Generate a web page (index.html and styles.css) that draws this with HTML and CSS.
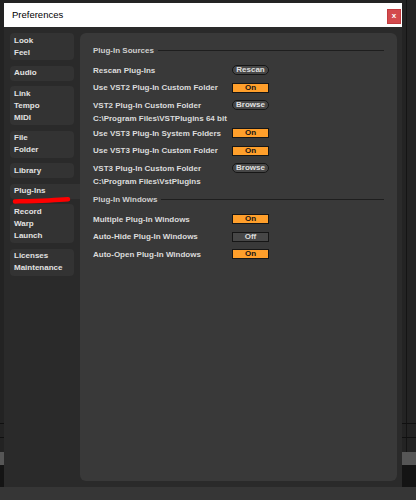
FILE: index.html
```html
<!DOCTYPE html>
<html>
<head>
    <title>Preferences</title>
    <link rel="stylesheet" href="styles.css">
</head>
<body>
    <div class="window">
        <div class="titlebar">
            <span class="title">Preferences</span>
            <span class="close">x</span>
        </div>
        <div class="content">
            <div class="sidebar">
                <div class="tab"><div>Look</div><div>Feel</div></div>
                <div class="tab"><div>Audio</div></div>
                <div class="tab"><div>Link</div><div>Tempo</div><div>MIDI</div></div>
                <div class="tab"><div>File</div><div>Folder</div></div>
                <div class="tab"><div>Library</div></div>
                <div class="tab selected">
                    <div>Plug-Ins</div>
                    <svg class="scribble" width="60" height="8" viewBox="0 0 60 8">
                        <path d="M3 5.5 C 20 5, 40 4.5, 56 3.2" stroke="#ff0000" stroke-width="4.5" stroke-linecap="round" fill="none"/>
                    </svg>
                </div>
                <div class="tab"><div>Record</div><div>Warp</div><div>Launch</div></div>
                <div class="tab"><div>Licenses</div><div>Maintenance</div></div>
            </div>
            <div class="panel">
                <div class="section-head"><span>Plug-In Sources</span><i class="rule"></i></div>
                <div class="row"><span class="label">Rescan Plug-Ins</span><span class="btn pill">Rescan</span></div>
                <div class="row"><span class="label">Use VST2 Plug-In Custom Folder</span><span class="btn on">On</span></div>
                <div class="row"><span class="label">VST2 Plug-In Custom Folder</span><span class="btn pill">Browse</span></div>
                <div class="path">C:\Program Files\VSTPlugins 64 bit</div>
                <div class="row"><span class="label">Use VST3 Plug-In System Folders</span><span class="btn on">On</span></div>
                <div class="row"><span class="label">Use VST3 Plug-In Custom Folder</span><span class="btn on">On</span></div>
                <div class="row"><span class="label">VST3 Plug-In Custom Folder</span><span class="btn pill">Browse</span></div>
                <div class="path">C:\Program Files\VstPlugins</div>

                <div class="section-head second"><span>Plug-In Windows</span><i class="rule"></i></div>
                <div class="row"><span class="label">Multiple Plug-In Windows</span><span class="btn on">On</span></div>
                <div class="row"><span class="label">Auto-Hide Plug-In Windows</span><span class="btn off">Off</span></div>
                <div class="row"><span class="label">Auto-Open Plug-In Windows</span><span class="btn on">On</span></div>
            </div>
        </div>
    </div>
</body>
</html>
```

FILE: styles.css
```css
body {
    margin: 0;
    padding: 3px 14px 13px 4px;
    height: 500px;
    box-sizing: border-box;
    font-family: 'Liberation Sans', Arial, sans-serif;
    background:
        linear-gradient(to bottom,
            transparent 423px, #101010 423px, #101010 424px,
            transparent 424px, transparent 437px, #101010 437px, #101010 438px,
            transparent 438px, transparent 452px, #565656 452px, #565656 465px,
            #141414 465px, #141414 487px, #363636 487px),
        linear-gradient(to right, transparent 406px, #141414 406px, #141414 407px, transparent 407px),
        #232323;
}

.window {
    width: 398px;
    height: 484px;
    display: flex;
    flex-direction: column;
    background-color: #2a2a2a;
}

.titlebar {
    height: 24px;
    background-color: #ffffff;
    display: flex;
    align-items: flex-start;
    justify-content: space-between;
}

.title {
    font-size: 9.5px;
    color: #000000;
    padding-left: 8px;
    line-height: 24px;
}

.close {
    width: 14px;
    height: 15px;
    margin-top: 6px;
    margin-right: 1px;
    box-sizing: border-box;
    background-color: #d34a4d;
    border: 1px solid #c23c3f;
    color: #ffffff;
    font-size: 8px;
    font-weight: bold;
    text-align: center;
    line-height: 12px;
}

.content {
    flex: 1;
    display: flex;
    padding: 6px 5px 6px 6px;
    gap: 6px;
}

.sidebar {
    width: 64px;
    display: flex;
    flex-direction: column;
    gap: 5.5px;
}

.tab {
    background-color: #333333;
    border-radius: 4px;
    padding: 1.5px 4px;
    font-size: 8px;
    font-weight: bold;
    line-height: 12px;
    color: #e2e2e2;
}

.tab.selected {
    position: relative;
    margin-right: -6px;
    border-radius: 4px 0 0 4px;
}

.scribble {
    position: absolute;
    left: 2px;
    top: 12px;
}

.panel {
    flex: 1;
    background-color: #393939;
    border-radius: 6px;
    padding: 8px 13px 0 13px;
    color: #dcdcdc;
    font-size: 8px;
    font-weight: bold;
}

.section-head {
    height: 18px;
    display: flex;
    align-items: center;
    gap: 4px;
    color: #cfcfcf;
    margin-bottom: 2.25px;
}

.section-head.second {
    margin-top: 2.75px;
}

.rule {
    flex: 1;
    height: 1px;
    background-color: #1e1e1e;
}

.row {
    height: 17.5px;
    display: flex;
    align-items: center;
}

.label {
    width: 139px;
}

.path {
    height: 10.5px;
    line-height: 10px;
}

.btn {
    width: 37px;
    height: 10px;
    box-sizing: border-box;
    border: 1px solid #161616;
    text-align: center;
    line-height: 8px;
    font-size: 8px;
}

.btn.pill {
    border-radius: 5px;
    background-color: #474747;
    color: #e0e0e0;
}

.btn.on {
    background-color: #ff9f2b;
    color: #141414;
}

.btn.off {
    background-color: #474747;
    color: #dcdcdc;
}
```
